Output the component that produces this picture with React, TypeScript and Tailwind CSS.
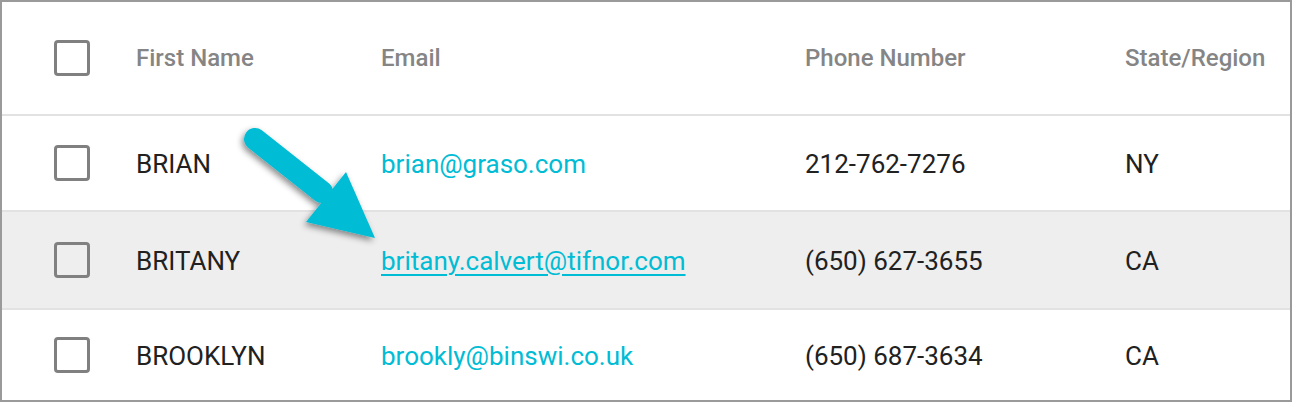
import React from "react";

const rows = [
  { name: "BRIAN", email: "brian@graso.com", phone: "212-762-7276", state: "NY", hover: false, h: "h-[96px] border-b-2 border-[#e2e2e2] " },
  { name: "BRITANY", email: "britany.calvert@tifnor.com", phone: "(650) 627-3655", state: "CA", hover: true, h: "h-[98px] border-b-2 border-[#e2e2e2] " },
  { name: "BROOKLYN", email: "brookly@binswi.co.uk", phone: "(650) 687-3634", state: "CA", hover: false, h: "h-[90px] " },
];

function Box() {
  return <div className="w-[36px] h-[36px] rounded-[4px] border-[3px] border-[#808080] box-border" />;
}

export default function App() {
  return (
    <div
      className="relative w-[1292px] h-[402px] bg-white border-2 border-[#9a9a9a] overflow-hidden"
      style={{ fontFamily: "Roboto, 'Noto Sans', sans-serif" }}
    >
      <div className="flex items-center h-[114px] border-b-2 border-[#e2e2e2] pl-[52px] text-[24px] leading-none font-medium text-[#858585]">
        <div className="w-[82px]"><Box /></div>
        <div className="w-[245px]">First Name</div>
        <div className="w-[424px]">Email</div>
        <div className="w-[320px]">Phone Number</div>
        <div>State/Region</div>
      </div>
      {rows.map((r, i) => (
        <div
          key={i}
          className={
            "flex items-center pl-[52px] text-[26px] leading-none text-[#212121] " +
            r.h +
            (r.hover ? "bg-[#eeeeee]" : "bg-white")
          }
        >
          <div className="w-[82px]"><Box /></div>
          <div className="w-[245px] pt-[2px]">{r.name}</div>
          <div className={"w-[424px] pt-[2px] text-[#00bcd4] " + (r.hover ? "underline underline-offset-[4px] decoration-[2px]" : "")}>
            {r.email}
          </div>
          <div className="w-[320px] pt-[2px]">{r.phone}</div>
          <div className="pt-[2px]">{r.state}</div>
        </div>
      ))}
      <svg
        className="absolute left-0 top-0 pointer-events-none"
        width="1292"
        height="402"
        viewBox="0 0 1292 402"
      >
        <defs>
          <filter id="sh" x="-30%" y="-30%" width="160%" height="160%">
            <feDropShadow dx="-2" dy="3" stdDeviation="3" floodColor="#000" floodOpacity="0.45" />
          </filter>
        </defs>
        <g filter="url(#sh)" transform="translate(-2,-2)">
          <line x1="255" y1="139" x2="322" y2="192" stroke="#00bcd4" strokeWidth="22" strokeLinecap="round" />
          <polygon points="346,172 306,222 375,238" fill="#00bcd4" />
        </g>
      </svg>
    </div>
  );
}
